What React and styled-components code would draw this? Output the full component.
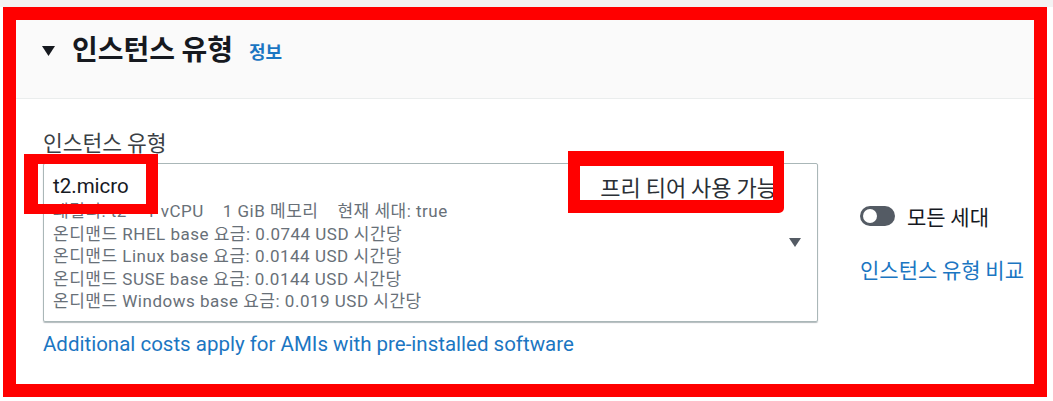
import React from 'react';
import styled, { createGlobalStyle } from 'styled-components';

const GlobalStyle = createGlobalStyle`
  html, body {
    margin: 0;
    padding: 0;
    background: #ffffff;
  }
  body {
    font-family: Roboto, "Noto Sans CJK KR", sans-serif;
    color: #16191f;
  }
`;

const Page = styled.div`
  padding: 7px 6px 4px 3px;
  background: linear-gradient(#f3f3f3 0 7px, #ffffff 7px);
`;

const Frame = styled.section`
  position: relative;
  box-sizing: border-box;
  width: 1044px;
  height: 390px;
  border: 13px solid #ff0000;
  background: #ffffff;
  overflow: hidden;
`;

const Header = styled.header`
  display: flex;
  align-items: center;
  box-sizing: border-box;
  height: 79px;
  padding: 0 0 22px 26px;
  background: #fafafa;
  border-bottom: 1px solid #eaeded;
`;

const Caret = styled.svg`
  flex: none;
  display: block;
  margin-top: 6px;
`;

const Title = styled.h2`
  margin: 0 0 0 17px;
  font-family: "Noto Sans CJK KR", sans-serif;
  font-size: 28px;
  font-weight: 700;
  line-height: 34px;
  color: #16191f;
`;

const InfoLink = styled.a`
  margin: 5px 0 0 16px;
  font-family: "Noto Sans CJK KR", sans-serif;
  font-size: 18px;
  font-weight: 700;
  color: #1b76c2;
  text-decoration: none;
`;

const Body = styled.div`
  padding: 30px 0 0 27px;
`;

const Row = styled.div`
  display: flex;
  align-items: flex-start;
  gap: 42px;
`;

const Field = styled.div`
  width: 775px;
`;

const Label = styled.div`
  font-family: "Noto Sans CJK KR", sans-serif;
  font-size: 21.5px;
  line-height: 26px;
  color: #3a3f45;
  margin-bottom: 8px;
`;

const Select = styled.div`
  position: relative;
  display: flex;
  align-items: center;
  box-sizing: border-box;
  height: 159px;
  border: 1px solid #aab7b8;
  border-radius: 2px;
  box-shadow: 0 1px 1px rgba(0, 28, 36, 0.3);
`;

const Option = styled.div`
  flex: 1;
  align-self: stretch;
  padding: 8px 0 0 9px;
`;

const OptionTop = styled.div`
  display: flex;
  justify-content: space-between;
  align-items: center;
  height: 28px;
  font-size: 20.5px;
  color: #16191f;
`;

const Tag = styled.span`
  margin-right: 4px;
  font-family: "Noto Sans CJK KR", sans-serif;
  font-size: 22px;
  color: #2b2f35;
`;

const Desc = styled.div`
  font-size: 17px;
  letter-spacing: 0.5px;
  line-height: 22.5px;
  color: #687078;
  white-space: nowrap;
`;

const Specs = styled(Desc)`
  display: flex;
  gap: 19px;
`;

const SelectCaret = styled.svg`
  flex: none;
  display: block;
  margin: 0 16px 0 8px;
`;

const Mark = styled.div`
  position: absolute;
  box-sizing: border-box;
  border-style: solid;
  border-color: #ff0000;
`;

const MicroMark = styled(Mark)`
  left: -20px;
  top: -10px;
  width: 134px;
  height: 60px;
  border-width: 10px 12px 10px 14px;
`;

const TierMark = styled(Mark)`
  left: 524px;
  top: -13px;
  width: 216px;
  height: 62px;
  border-width: 15px 11px 13px 12px;
  border-bottom-right-radius: 5px;
`;

const Side = styled.div`
  display: flex;
  flex-direction: column;
  align-items: flex-start;
  padding-top: 74px;
  gap: 27px;
`;

const ToggleRow = styled.label`
  display: flex;
  align-items: center;
  gap: 12px;
  font-family: "Noto Sans CJK KR", sans-serif;
  font-size: 21px;
  line-height: 26px;
  color: #16191f;
`;

const Toggle = styled.span`
  display: flex;
  align-items: center;
  box-sizing: border-box;
  width: 35px;
  height: 20px;
  padding: 0 3px;
  border-radius: 10px;
  background: #545b64;

  &::before {
    content: '';
    width: 14px;
    height: 14px;
    border-radius: 50%;
    background: #ffffff;
  }
`;

const Link = styled.a`
  font-family: ${p => (p.$latin ? 'Roboto, "Noto Sans CJK KR"' : '"Noto Sans CJK KR"')}, sans-serif;
  font-size: ${p => p.$size || '18px'};
  line-height: 26px;
  color: #1b76c2;
  text-decoration: none;
  white-space: nowrap;
`;

const Footer = styled.div`
  margin-top: 9px;
`;

const prices = [
  ['RHEL', '0.0744'],
  ['Linux', '0.0144'],
  ['SUSE', '0.0144'],
  ['Windows', '0.019'],
];

export default function App() {
  return (
    <Page>
      <GlobalStyle />
      <Frame>
        <Header>
          <Caret width="13" height="10" viewBox="0 0 13 10">
            <path d="M0 0 H13 L6.5 10 Z" fill="#16191f" />
          </Caret>
          <Title>인스턴스 유형</Title>
          <InfoLink href="#">정보</InfoLink>
        </Header>
        <Body>
          <Row>
            <Field>
              <Label>인스턴스 유형</Label>
              <Select>
                <Option>
                  <OptionTop>
                    <span>t2.micro</span>
                    <Tag>프리 티어 사용 가능</Tag>
                  </OptionTop>
                  <Specs>
                    <span>패밀리: t2</span>
                    <span>1 vCPU</span>
                    <span>1 GiB 메모리</span>
                    <span>현재 세대: true</span>
                  </Specs>
                  {prices.map(([os, price]) => (
                    <Desc key={os}>
                      온디맨드 {os} base 요금: {price} USD 시간당
                    </Desc>
                  ))}
                </Option>
                <SelectCaret width="12" height="9" viewBox="0 0 12 9">
                  <path d="M0 0 H12 L6 9 Z" fill="#545b64" />
                </SelectCaret>
                <MicroMark />
                <TierMark />
              </Select>
              <Footer>
                <Link href="#" $latin $size="20.5px">
                  Additional costs apply for AMIs with pre-installed software
                </Link>
              </Footer>
            </Field>
            <Side>
              <ToggleRow>
                <Toggle />
                모든 세대
              </ToggleRow>
              <Link href="#" $size="21px">인스턴스 유형 비교</Link>
            </Side>
          </Row>
        </Body>
      </Frame>
    </Page>
  );
}
